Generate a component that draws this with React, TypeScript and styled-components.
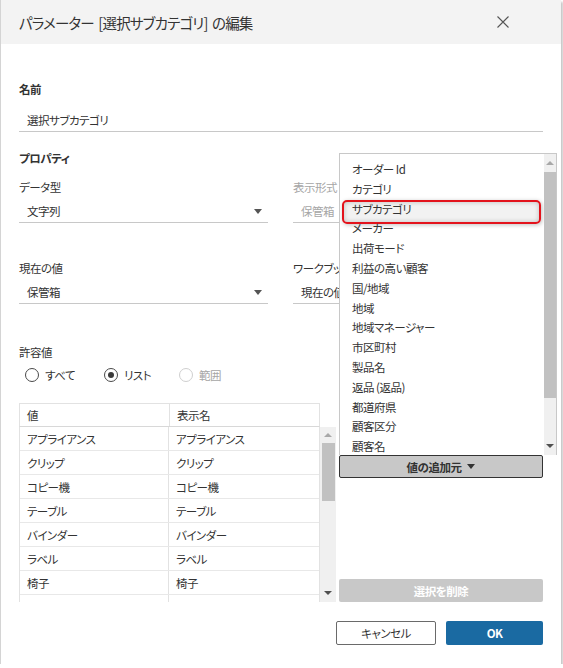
import styled, { createGlobalStyle } from "styled-components";

const GlobalStyle = createGlobalStyle`
  html, body {
    margin: 0;
    padding: 0;
    background: #ffffff;
  }
  body {
    font-family: "Noto Sans CJK JP", "Noto Sans", sans-serif;
    font-feature-settings: "palt" 1;
    color: #333333;
    font-size: 11.5px;
    letter-spacing: -0.5px;
  }
  * { box-sizing: border-box; }
`;

const fieldList = [
  "オーダー Id",
  "カテゴリ",
  "サブカテゴリ",
  "メーカー",
  "出荷モード",
  "利益の高い顧客",
  "国/地域",
  "地域",
  "地域マネージャー",
  "市区町村",
  "製品名",
  "返品 (返品)",
  "都道府県",
  "顧客区分",
  "顧客名",
  "製品 ID",
];

const rows = ["アプライアンス", "クリップ", "コピー機", "テーブル", "バインダー", "ラベル", "椅子", "家具"];

const Dialog = styled.div`
  width: 561px;
  height: 664px;
  border-left: 1px solid #d4d4d4;
  background: #ffffff;
  box-shadow: 2px 2px 2px rgba(0, 0, 0, 0.22);
  display: flex;
  flex-direction: column;
`;

const Header = styled.div`
  height: 44px;
  background: #f3f3f3;
  display: flex;
  align-items: center;
  justify-content: space-between;
  padding: 0 52px 0 18px;
`;

const Title = styled.div`
  font-size: 14.5px;
  color: #333333;
  letter-spacing: -0.8px;
  word-spacing: 2px;
`;

const CloseButton = styled.div`
  width: 12px;
  height: 12px;
  display: flex;
  svg { display: block; }
`;

const Body = styled.div`
  padding: 37px 18px 0 18px;
  display: flex;
  flex-direction: column;
`;

const SectionTitle = styled.div<{ $mt?: number }>`
  font-weight: 700;
  line-height: 16px;
  margin-top: ${(p) => p.$mt ?? 0}px;
`;

const Label = styled.div<{ $disabled?: boolean; $mt?: number }>`
  line-height: 16px;
  white-space: nowrap;
  color: ${(p) => (p.$disabled ? "#a6a6a6" : "#333333")};
  margin-top: ${(p) => p.$mt ?? 0}px;
`;

const TextInput = styled.div`
  height: 23px;
  margin-top: 12px;
  width: 524px;
  padding-left: 8px;
  display: flex;
  align-items: center;
  border-bottom: 1px solid #c8c8c8;
`;

const FieldGrid = styled.div`
  display: grid;
  grid-template-columns: 249px 249px;
  column-gap: 25px;
  row-gap: 37px;
  margin-top: 13px;
`;

const Field = styled.div`
  display: flex;
  flex-direction: column;
  min-width: 0;
`;

const Select = styled.div<{ $disabled?: boolean }>`
  height: 23px;
  margin-top: 5px;
  padding: 0 6px 0 8px;
  display: flex;
  align-items: center;
  justify-content: space-between;
  border-bottom: 1px solid #c8c8c8;
  white-space: nowrap;
  overflow: hidden;
  color: ${(p) => (p.$disabled ? "#a6a6a6" : "#333333")};
`;

const Caret = styled.span<{ $color?: string }>`
  width: 0;
  height: 0;
  border-left: 4px solid transparent;
  border-right: 4px solid transparent;
  border-top: 5px solid ${(p) => p.$color ?? "#555555"};
`;

const RadioRow = styled.div`
  display: flex;
  align-items: center;
  height: 16px;
  margin-top: 7px;
  padding-left: 6px;
`;

const RadioItem = styled.label<{ $disabled?: boolean; $w: number }>`
  display: flex;
  align-items: center;
  gap: 6px;
  width: ${(p) => p.$w}px;
  color: ${(p) => (p.$disabled ? "#a6a6a6" : "#333333")};
`;

const RadioCircle = styled.span<{ $checked?: boolean; $disabled?: boolean }>`
  width: 14px;
  height: 14px;
  border-radius: 50%;
  border: 1px solid ${(p) => (p.$disabled ? "#cfcfcf" : "#4a4a4a")};
  display: flex;
  align-items: center;
  justify-content: center;
  &::after {
    content: "";
    width: 6px;
    height: 6px;
    border-radius: 50%;
    background: #3a3a3a;
    display: ${(p) => (p.$checked ? "block" : "none")};
  }
`;

const Lower = styled.div`
  display: grid;
  grid-template-columns: 317px 204px;
  column-gap: 3px;
  margin-top: 20px;
  height: 199px;
`;

const TableWrap = styled.div`
  display: flex;
  flex-direction: column;
`;

const HeadRow = styled.div`
  width: 301px;
  height: 24px;
  display: grid;
  grid-template-columns: 150px 1fr;
  border: 1px solid #e2e2e2;
  border-bottom: 1px solid #d8d8d8;
`;

const Cell = styled.div<{ $last?: boolean }>`
  padding-left: 7px;
  display: flex;
  align-items: center;
  white-space: nowrap;
  border-right: ${(p) => (p.$last ? "none" : "1px solid #e2e2e2")};
`;

const TableBody = styled.div`
  display: flex;
  height: 175px;
  overflow: hidden;
`;

const RowsList = styled.div`
  width: 301px;
  border-left: 1px solid #e2e2e2;
  border-right: 1px solid #e2e2e2;
  overflow: hidden;
`;

const Row = styled.div`
  height: 24px;
  display: grid;
  grid-template-columns: 149px 1fr;
  border-bottom: 1px solid #e8e8e8;
`;

const Track = styled.div<{ $w: number }>`
  width: ${(p) => p.$w}px;
  background: #f0f0f0;
  display: flex;
  flex-direction: column;
  align-items: center;
  flex-shrink: 0;
`;

const ArrowBox = styled.div<{ $h: number }>`
  height: ${(p) => p.$h}px;
  width: 100%;
  display: flex;
  align-items: center;
  justify-content: center;
  flex-shrink: 0;
`;

const UpTri = styled.span<{ $color: string }>`
  width: 0;
  height: 0;
  border-left: 4px solid transparent;
  border-right: 4px solid transparent;
  border-bottom: 4px solid ${(p) => p.$color};
`;

const DownTri = styled.span<{ $color: string }>`
  width: 0;
  height: 0;
  border-left: 4px solid transparent;
  border-right: 4px solid transparent;
  border-top: 4px solid ${(p) => p.$color};
`;

const Thumb = styled.div<{ $h: number; $w: number }>`
  width: ${(p) => p.$w}px;
  height: ${(p) => p.$h}px;
  background: #c1c1c1;
  flex-shrink: 0;
`;

const Spacer = styled.div`
  flex: 1;
`;

const SideColumn = styled.div`
  display: flex;
  flex-direction: column;
  padding-top: 52px;
`;

const AddWrap = styled.div`
  position: relative;
`;

const GrayButton = styled.button<{ $outlined?: boolean; $light?: boolean }>`
  width: 204px;
  height: 23px;
  border-radius: 2px;
  border: ${(p) => (p.$outlined ? "1px solid #333333" : "none")};
  background: #c8c8c8;
  color: ${(p) => (p.$light ? "#ffffff" : "#333333")};
  font-family: inherit;
  font-feature-settings: "palt" 1;
  font-size: 11.5px;
  letter-spacing: -0.5px;
  font-weight: 700;
  display: flex;
  align-items: center;
  justify-content: center;
  gap: 6px;
  padding: 0;
`;

const Popup = styled.div`
  position: absolute;
  left: 0;
  bottom: 100%;
  width: 218px;
  height: 302px;
  background: #ffffff;
  border: 1px solid #c8c8c8;
  border-bottom: none;
  display: flex;
  z-index: 5;
`;

const PopupList = styled.div`
  flex: 1;
  padding-top: 6px;
  overflow: hidden;
  position: relative;
`;

const PopupItem = styled.div`
  position: relative;
  height: 19.8px;
  line-height: 19.8px;
  padding-left: 12px;
  white-space: nowrap;
  color: #333333;
`;

const Highlight = styled.span`
  position: absolute;
  left: 2px;
  right: 3px;
  top: 0px;
  height: 24px;
  border: 2px solid #e3131c;
  border-radius: 5px;
  background: rgba(0, 0, 0, 0.05);
  box-shadow: inset 0 0 5px rgba(0, 0, 0, 0.22), 1px 1px 4px rgba(0, 0, 0, 0.25);
`;

const ItemText = styled.span`
  position: relative;
`;

const Footer = styled.div`
  display: flex;
  justify-content: flex-end;
  gap: 10px;
  margin-top: 19px;
`;

const FooterButton = styled.button<{ $primary?: boolean; $w: number }>`
  width: ${(p) => p.$w}px;
  height: 24px;
  border-radius: 2px;
  font-family: inherit;
  font-feature-settings: "palt" 1;
  font-size: 11.5px;
  letter-spacing: -0.5px;
  padding: 0;
  border: ${(p) => (p.$primary ? "none" : "1px solid #6a6a6a")};
  background: ${(p) => (p.$primary ? "#1a6aa2" : "#ffffff")};
  color: ${(p) => (p.$primary ? "#ffffff" : "#333333")};
  font-weight: ${(p) => (p.$primary ? 700 : 400)};
`;

export default function App() {
  return (
    <>
      <GlobalStyle />
      <Dialog>
        <Header>
          <Title>パラメーター [選択サブカテゴリ] の編集</Title>
          <CloseButton>
            <svg width="12" height="12" viewBox="0 0 12 12">
              <path d="M0.5 0.5 L11.5 11.5 M11.5 0.5 L0.5 11.5" stroke="#555" strokeWidth="1.1" fill="none" />
            </svg>
          </CloseButton>
        </Header>
        <Body>
          <SectionTitle>名前</SectionTitle>
          <TextInput>選択サブカテゴリ</TextInput>

          <SectionTitle $mt={18}>プロパティ</SectionTitle>
          <FieldGrid>
            <Field>
              <Label>データ型</Label>
              <Select>
                文字列
                <Caret />
              </Select>
            </Field>
            <Field>
              <Label $disabled>表示形式</Label>
              <Select $disabled>
                保管箱
                <Caret $color="#cccccc" />
              </Select>
            </Field>
            <Field>
              <Label>現在の値</Label>
              <Select>
                保管箱
                <Caret />
              </Select>
            </Field>
            <Field>
              <Label>ワークブックを開いたときの値</Label>
              <Select>
                現在の値
                <Caret />
              </Select>
            </Field>
          </FieldGrid>

          <Label $mt={40}>許容値</Label>
          <RadioRow>
            <RadioItem $w={79}>
              <RadioCircle />
              すべて
            </RadioItem>
            <RadioItem $w={75}>
              <RadioCircle $checked />
              リスト
            </RadioItem>
            <RadioItem $w={80} $disabled>
              <RadioCircle $disabled />
              範囲
            </RadioItem>
          </RadioRow>

          <Lower>
            <TableWrap>
              <HeadRow>
                <Cell>値</Cell>
                <Cell $last>表示名</Cell>
              </HeadRow>
              <TableBody>
                <RowsList>
                  {rows.map((r) => (
                    <Row key={r}>
                      <Cell>{r}</Cell>
                      <Cell $last>{r}</Cell>
                    </Row>
                  ))}
                </RowsList>
                <Track $w={16}>
                  <ArrowBox $h={16}>
                    <UpTri $color="#a8a8a8" />
                  </ArrowBox>
                  <Thumb $w={13} $h={58} />
                  <Spacer />
                  <ArrowBox $h={18}>
                    <DownTri $color="#505050" />
                  </ArrowBox>
                </Track>
              </TableBody>
            </TableWrap>

            <SideColumn>
              <AddWrap>
                <Popup>
                  <PopupList>
                    {fieldList.map((f) => (
                      <PopupItem key={f}>
                        {f === "サブカテゴリ" && <Highlight />}
                        <ItemText>{f}</ItemText>
                      </PopupItem>
                    ))}
                  </PopupList>
                  <Track $w={12}>
                    <ArrowBox $h={18}>
                      <UpTri $color="#a8a8a8" />
                    </ArrowBox>
                    <Thumb $w={12} $h={226} />
                    <Spacer />
                    <ArrowBox $h={18}>
                      <DownTri $color="#505050" />
                    </ArrowBox>
                  </Track>
                </Popup>
                <GrayButton $outlined>
                  値の追加元
                  <Caret $color="#333333" />
                </GrayButton>
              </AddWrap>
              <Spacer />
              <GrayButton $light>選択を削除</GrayButton>
            </SideColumn>
          </Lower>

          <Footer>
            <FooterButton $w={100}>キャンセル</FooterButton>
            <FooterButton $w={97} $primary>
              OK
            </FooterButton>
          </Footer>
        </Body>
      </Dialog>
    </>
  );
}
